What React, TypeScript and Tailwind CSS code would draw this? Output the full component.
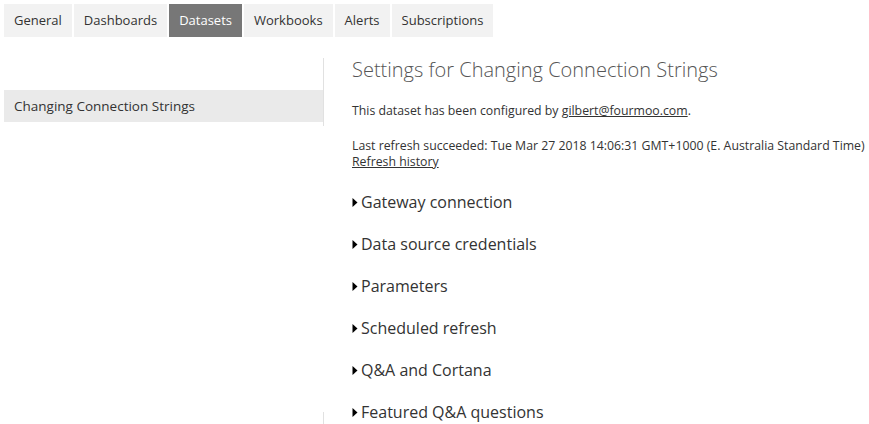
const tabs = ['General', 'Dashboards', 'Datasets', 'Workbooks', 'Alerts', 'Subscriptions']

const sections = [
  'Gateway connection',
  'Data source credentials',
  'Parameters',
  'Scheduled refresh',
  'Q&A and Cortana',
  'Featured Q&A questions'
]

function Caret() {
  return (
    <svg width="6" height="11" viewBox="0 0 6 11" className="shrink-0">
      <path d="M0.5 1 L5.5 5.5 L0.5 10 Z" fill="#000" />
    </svg>
  )
}

export default function App() {
  return (
    <div
      className="w-[869px] h-[424px] bg-white text-[#333] overflow-hidden"
      style={{ fontFamily: '"Segoe UI", "Open Sans", sans-serif' }}
    >
      {/* Tabs */}
      <div className="flex gap-[2px] pl-[4px] pt-[4px]">
        {tabs.map(tab => (
          <div
            key={tab}
            className={
              tab === 'Datasets'
                ? 'h-[33px] px-[10px] flex items-center text-[13px] bg-[#777] text-white'
                : 'h-[33px] px-[10px] flex items-center text-[13px] bg-[#f2f2f2] text-[#333]'
            }
          >
            {tab}
          </div>
        ))}
      </div>

      <div className="flex">
        {/* Left nav */}
        <div className="w-[320px] ml-[4px] flex flex-col h-[387px]">
          <div className="border-r border-[#e1e1e1] mt-[21px] pt-[32px]">
            <div className="h-[32px] bg-[#eaeaea] pl-[10px] flex items-center text-[13.5px] text-[#333]">
              Changing Connection Strings
            </div>
            <div className="h-[4px]" />
          </div>
          <div className="flex-1" />
          <div className="h-[12px] border-r border-[#e1e1e1]" />
        </div>

        {/* Content */}
        <div className="ml-[28px] pt-[20px]">
          <h1 className="text-[20px] font-light text-[#555] leading-[26px]">
            Settings for Changing Connection Strings
          </h1>
          <p className="text-[12.3px] mt-[20px] leading-[16px]">
            This dataset has been configured by{' '}
            <span className="underline">gilbert@fourmoo.com</span>.
          </p>
          <p className="text-[12.3px] mt-[19px] leading-[16px]">
            Last refresh succeeded: Tue Mar 27 2018 14:06:31 GMT+1000 (E. Australia Standard Time)
          </p>
          <p className="text-[12.3px] leading-[16px] underline">Refresh history</p>
          <div className="mt-[21px] flex flex-col gap-[20px]">
            {sections.map(s => (
              <div key={s} className="flex items-center gap-[3px] h-[22px]">
                <Caret />
                <span className="text-[16px] text-[#333]">{s}</span>
              </div>
            ))}
          </div>
        </div>
      </div>
    </div>
  )
}
